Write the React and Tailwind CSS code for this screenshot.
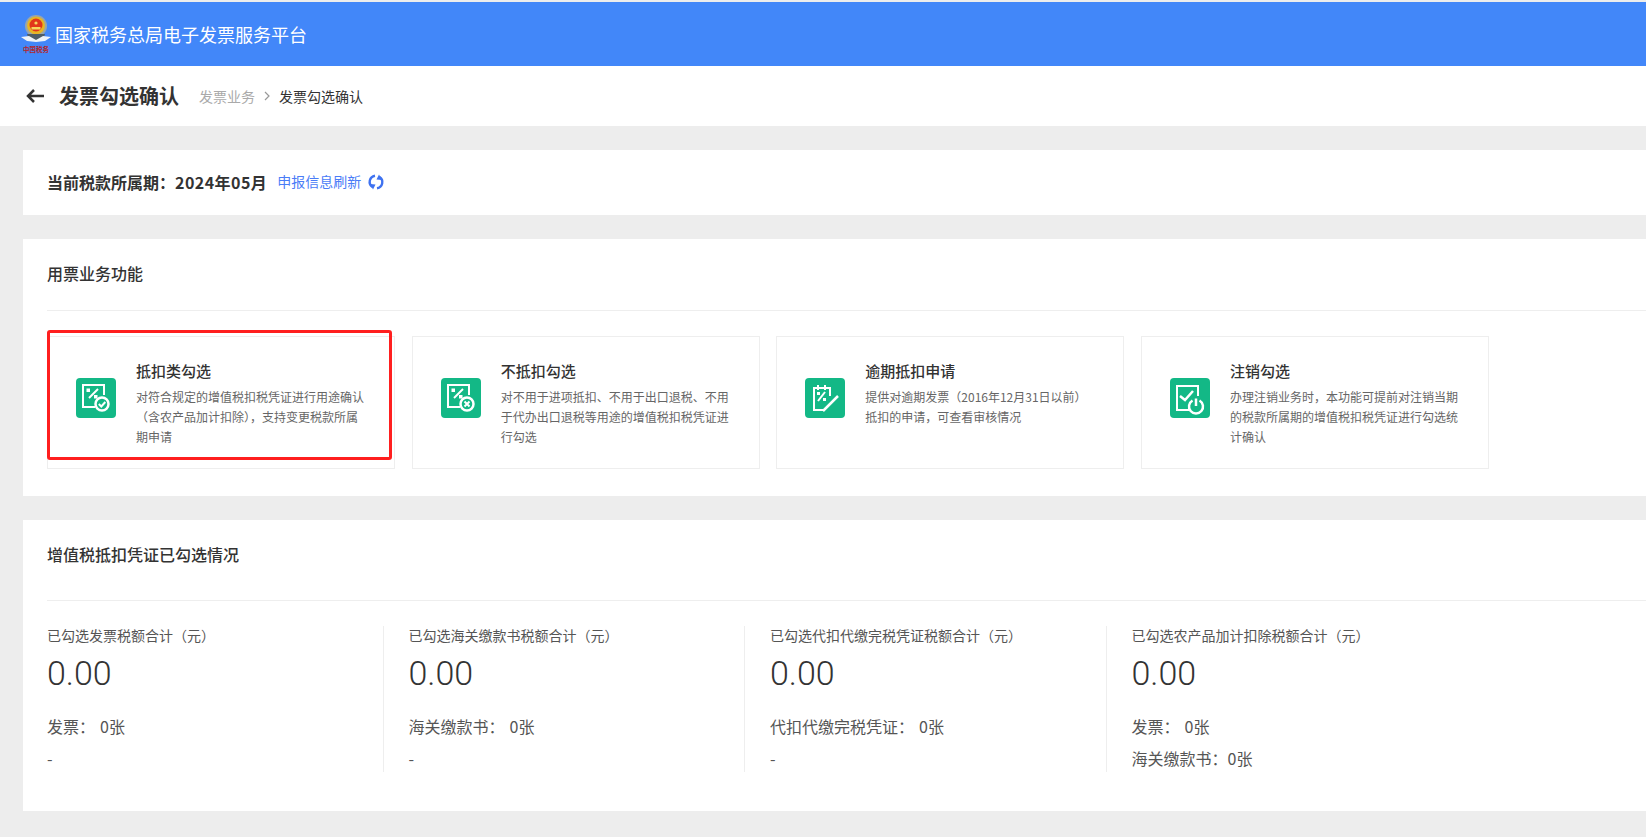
const Logo = () => {
  return (
    <div className="flex flex-col items-center w-[30px] mr-[4px]">
      <svg width="30" height="29" viewBox="0 0 30 29">
        <circle cx="15" cy="11" r="11" fill="#9aa5a8" />
        <circle cx="15" cy="10.5" r="9" fill="#e8b523" />
        <circle cx="15" cy="10" r="6.5" fill="#e2351a" />
        <path d="M10.5 12 h9 v2.5 h-9 z" fill="#f6d65c" />
        <circle cx="15" cy="8" r="1.6" fill="#f6d65c" />
        <path d="M6 19 h18 l-2 6 h-14 z" fill="#4f5d66" />
        <path d="M0 22 L8 21 L15 25 L22 21 L30 22 L24 26 L15 27 L6 26 Z" fill="#eef3f8" />
      </svg>
      <div className="text-[6.5px] leading-[8px] mt-[1px] text-[#b3262a] font-bold whitespace-nowrap">中国税务</div>
    </div>
  );
};

const Icon = ({ type }) => {
  return (
    <div className="w-[40px] h-[40px] shrink-0 rounded-[4px] bg-[#13b886] mr-[20px] mt-[41px]">
      <svg width="40" height="40" viewBox="0 0 40 40" fill="none" stroke="#fff" strokeWidth="2">
        {type === "check" && (
          <g>
            <path d="M19 29 H7 V7 H28 V17" />
            <path d="M13 20 L22 11" />
            <rect x="10.5" y="10.5" width="3.5" height="3.5" fill="#fff" stroke="none" />
            <rect x="18" y="17" width="3.5" height="3.5" fill="#fff" stroke="none" />
            <circle cx="26" cy="26" r="6.5" strokeWidth="2.5" />
            <path d="M22.8 26 L25.3 28.5 L29.3 24" />
          </g>
        )}
        {type === "cross" && (
          <g>
            <path d="M19 29 H7 V7 H28 V17" />
            <path d="M13 20 L22 11" />
            <rect x="10.5" y="10.5" width="3.5" height="3.5" fill="#fff" stroke="none" />
            <rect x="18" y="17" width="3.5" height="3.5" fill="#fff" stroke="none" />
            <circle cx="26" cy="26" r="6.5" strokeWidth="2.5" />
            <path d="M23.5 23.5 L28.5 28.5 M28.5 23.5 L23.5 28.5" />
          </g>
        )}
        {type === "pen" && (
          <g>
            <path d="M25 18 V10 H9 V32 H18" />
            <path d="M13 7 V12 M20 7 V12" />
            <path d="M13 23 L20 14" />
            <rect x="12" y="14" width="3" height="3" fill="#fff" stroke="none" />
            <rect x="18" y="20" width="3" height="3" fill="#fff" stroke="none" />
            <path d="M18 33 L33 18" strokeWidth="2.5" />
          </g>
        )}
        {type === "power" && (
          <g>
            <path d="M19 32 H7 V8 H28 V18" />
            <path d="M10 18 L15 22 L23 13" strokeWidth="2.5" />
            <path d="M22.5 22.5 A7 7 0 1 0 29.5 22.5" strokeWidth="2.5" />
            <path d="M26 20.5 V28" strokeWidth="2.5" />
          </g>
        )}
      </svg>
    </div>
  );
};

const funcs = [
  {
    icon: "check",
    title: "抵扣类勾选",
    lines: ["对符合规定的增值税扣税凭证进行用途确认", "（含农产品加计扣除），支持变更税款所属", "期申请"],
  },
  {
    icon: "cross",
    title: "不抵扣勾选",
    lines: ["对不用于进项抵扣、不用于出口退税、不用", "于代办出口退税等用途的增值税扣税凭证进", "行勾选"],
  },
  {
    icon: "pen",
    title: "逾期抵扣申请",
    lines: ["提供对逾期发票（2016年12月31日以前）", "抵扣的申请，可查看审核情况"],
  },
  {
    icon: "power",
    title: "注销勾选",
    lines: ["办理注销业务时，本功能可提前对注销当期", "的税款所属期的增值税扣税凭证进行勾选统", "计确认"],
  },
];

const stats = [
  { label: "已勾选发票税额合计（元）", rows: ["发票：", "0张"], extra: "-" },
  { label: "已勾选海关缴款书税额合计（元）", rows: ["海关缴款书：", "0张"], extra: "-" },
  { label: "已勾选代扣代缴完税凭证税额合计（元）", rows: ["代扣代缴完税凭证：", "0张"], extra: "-" },
  { label: "已勾选农产品加计扣除税额合计（元）", rows: ["发票：", "0张"], extra: "海关缴款书：0张" },
];

export default function App() {
  return (
    <div
      className="w-[1646px] h-[837px] overflow-hidden bg-[#ededed] text-[#333] pt-[2px] relative"
      style={{ fontFamily: '"Noto Sans CJK SC", "Noto Sans", sans-serif' }}
    >
      <div className="h-[64px] bg-[#4287f9] flex items-center pl-[21px] text-white text-[18px]">
        <Logo />
        <span>国家税务总局电子发票服务平台</span>
      </div>

      <div className="h-[60px] bg-white flex items-center pl-[26px]">
        <svg width="18" height="14" viewBox="0 0 18 14" fill="none" stroke="#333" strokeWidth="2.5" className="mr-[15px]">
          <path d="M18 7 H2 M8 1 L2 7 L8 13" />
        </svg>
        <span className="text-[20px] font-bold mr-[20px]">发票勾选确认</span>
        <span className="text-[14px] text-[#aaa]">发票业务</span>
        <svg width="8" height="10" viewBox="0 0 8 10" fill="none" stroke="#999" strokeWidth="1.2" className="mx-[8px]">
          <path d="M2 1 L6 5 L2 9" />
        </svg>
        <span className="text-[14px]">发票勾选确认</span>
      </div>

      <div className="ml-[23px] mt-[24px] h-[65px] bg-white flex items-center pl-[24px] pb-[2px]">
        <span className="text-[16px] font-bold mr-[10px]">
          当前税款所属期：<span className="tracking-[0.45px]">2024年05月</span>
        </span>
        <span className="text-[14px] text-[#4a7cf7] mr-[6px]">申报信息刷新</span>
        <svg width="18" height="16" viewBox="0 0 18 16" fill="none" stroke="#3f72f0" strokeWidth="2.4">
          <path d="M8 1.8 A6.5 6.2 0 0 0 5.5 13" />
          <path d="M10 14.2 A6.5 6.2 0 0 0 12.5 3" />
          <path d="M3 10 L8.5 10.5 L6 15.5 Z" fill="#3f72f0" stroke="none" />
          <path d="M15 6 L9.5 5.5 L12 0.5 Z" fill="#3f72f0" stroke="none" />
        </svg>
      </div>

      <div className="ml-[23px] mt-[24px] h-[257px] bg-white pl-[24px]">
        <div className="h-[72px] flex items-center border-b border-[#eee] text-[16px] font-medium pb-[4px]">用票业务功能</div>
        <div className="flex gap-[16.67px] mt-[25px]">
          {funcs.map((f) => (
            <div key={f.title} className="w-[348px] h-[133px] border border-[#eee] flex items-start pl-[28px]">
              <Icon type={f.icon} />
              <div className="w-[240px] pt-[23px]">
                <div className="text-[15px] font-medium leading-[22px] mb-[5px]">{f.title}</div>
                {f.lines.map((l) => (
                  <div key={l} className="text-[12px] leading-[20px] text-[#666]">{l}</div>
                ))}
              </div>
            </div>
          ))}
        </div>
      </div>

      <div className="ml-[23px] mt-[24px] h-[291px] bg-white pl-[24px]">
        <div className="h-[81px] flex items-center border-b border-[#eee] text-[16px] font-medium pb-[12px]">增值税抵扣凭证已勾选情况</div>
        <div className="flex mt-[25px]">
          {stats.map((s, i) => (
            <div
              key={s.label}
              className={i < 3 ? "w-[336.5px] h-[146px] mr-[25px] border-r border-[#eee] shrink-0" : "w-[336.5px] h-[146px] shrink-0"}
            >
              <div className="text-[14px] leading-[18px] text-[#555]">{s.label}</div>
              <div className="text-[34px] leading-[46px] mt-[6px] text-[#333] font-light font-['Roboto']">0.00</div>
              <div className="flex text-[16px] leading-[24px] text-[#555] mt-[18px]">
                <span className="mr-[5px]">{s.rows[0]}</span>
                <span>{s.rows[1]}</span>
              </div>
              <div className="text-[16px] leading-[24px] text-[#555] mt-[8px]">{s.extra}</div>
            </div>
          ))}
        </div>
      </div>

      <div className="absolute left-[47px] top-[330px] w-[345px] h-[130px] border-[3px] border-[#ff1f1f] rounded-[3px]" />
    </div>
  );
}
